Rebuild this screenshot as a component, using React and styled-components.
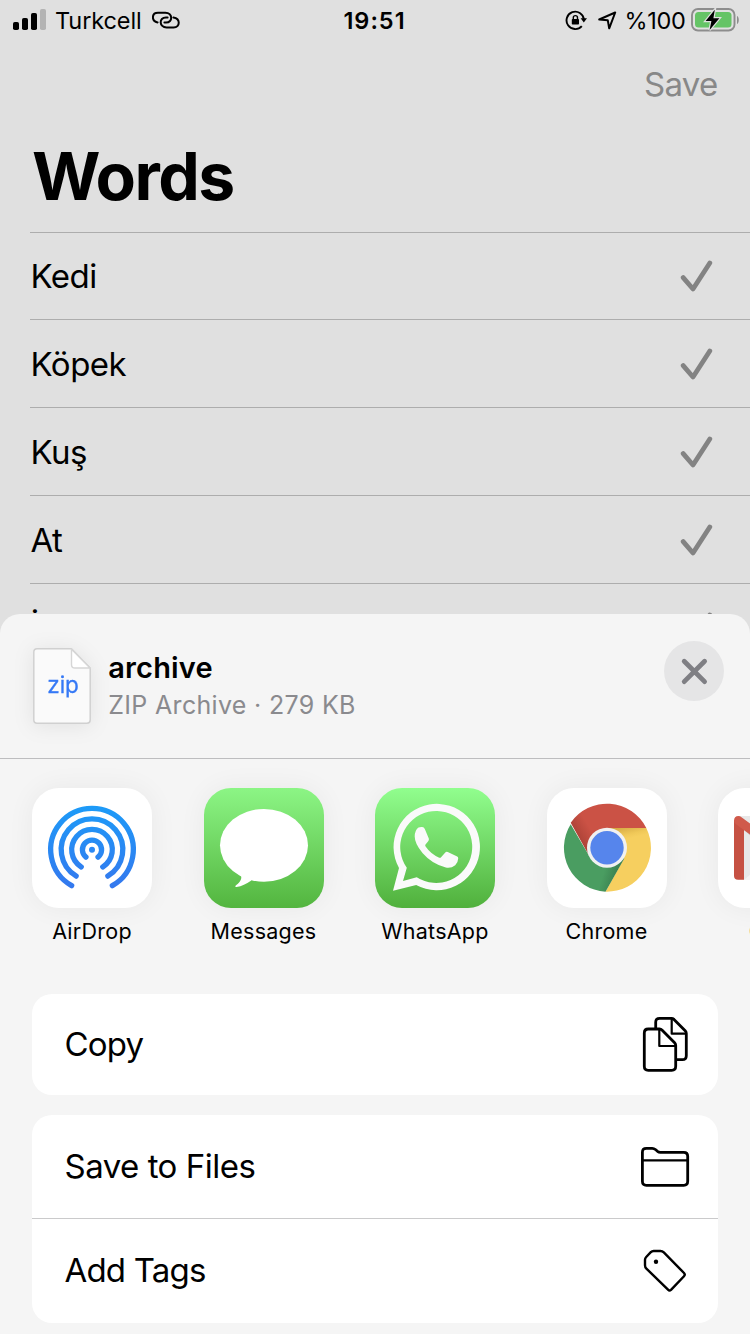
import React from 'react';
import styled, { createGlobalStyle } from 'styled-components';

const GlobalStyle = createGlobalStyle`
  * { box-sizing: border-box; }
  body { margin: 0; background: #e0e0e0; }
  svg { display: block; flex: none; }
`;

const Screen = styled.main`
  position: relative;
  width: 750px;
  height: 1334px;
  overflow: hidden;
  background: #e0e0e0;
  color: #000;
  font-family: Inter, 'Liberation Sans', sans-serif;
`;

const Label = styled.span`
  display: block;
  white-space: nowrap;
  font-size: ${(p) => p.$size}px;
  font-weight: ${(p) => p.$weight || 400};
  letter-spacing: ${(p) => p.$track || 0}px;
  line-height: 1.2;
  color: ${(p) => p.$color || 'inherit'};
`;

const StatusBar = styled.header`
  display: grid;
  grid-template-columns: 1fr auto 1fr;
  align-items: center;
  height: 40px;
  padding: 0 10.5px 0 13px;

  ${Label} { padding-top: 2px; }
`;

const StatusGroup = styled.div`
  display: flex;
  align-items: center;
  justify-content: ${(p) => (p.$end ? 'flex-end' : 'flex-start')};
`;

const Clock = styled(Label)`
  margin-right: 3.5px;
`;

const Gap = styled.span`
  flex: none;
  width: ${(p) => p.$w}px;
`;

const NavBar = styled.nav`
  display: flex;
  align-items: center;
  justify-content: flex-end;
  height: 88px;
  padding: 2px 32.5px 0 0;
`;

const Title = styled.h1`
  margin: 0;
  height: 104px;
  padding: 8px 0 0 32px;
  font-size: 66px;
  font-weight: 700;
  line-height: 80px;
  letter-spacing: -1.6px;
`;

const WordList = styled.ul`
  margin: 0 0 0 30px;
  padding: 0;
  list-style: none;
  border-top: 1px solid #adadad;
`;

const WordRow = styled.li`
  display: flex;
  align-items: center;
  justify-content: space-between;
  height: ${(p) => (p.$first ? 87 : 88)}px;
  padding-right: 34px;
  border-bottom: 1px solid #adadad;

  ${Label} { padding: 2px 0 0 0.5px; }
`;

const Sheet = styled.section`
  position: absolute;
  inset: 614px 0 0;
  display: flex;
  flex-direction: column;
  border-radius: 20px 20px 0 0;
  background: #f5f5f5;
  overflow: hidden;
`;

const SheetHeader = styled.div`
  display: flex;
  align-items: flex-start;
  height: 145px;
  padding: 34px 26px 0 33px;
  border-bottom: 1px solid #bdbdbf;
`;

const FileIcon = styled.div`
  filter: drop-shadow(0 2px 10px rgba(0, 0, 0, 0.08));
`;

const FileInfo = styled.div`
  flex: 1;
  display: flex;
  flex-direction: column;
  gap: 4px;
  padding: 3px 0 0 17.3px;
`;

const CloseButton = styled.button`
  display: grid;
  place-items: center;
  width: 60px;
  height: 60px;
  margin-top: -7px;
  padding: 0;
  border: 0;
  border-radius: 50%;
  background: #e5e5e6;
`;

const AppRow = styled.div`
  display: flex;
  gap: 51.5px;
  height: 235px;
  padding: 29px 0 0 32px;
`;

const AppItem = styled.div`
  flex: none;
  display: flex;
  flex-direction: column;
  align-items: center;
  gap: 11px;
  width: 120px;
`;

const AppTile = styled.div`
  width: 120px;
  height: 120px;
  border-radius: 27px;
  overflow: hidden;
  background: ${(p) => p.$bg || '#fff'};
  box-shadow: 0 0 28px rgba(0, 0, 0, 0.055);
`;

const Actions = styled.div`
  display: flex;
  flex-direction: column;
  gap: 20px;
  padding: 0 32px;
`;

const Card = styled.div`
  border-radius: 20px;
  background: #fff;
`;

const ActionRow = styled.div`
  display: flex;
  align-items: center;
  justify-content: space-between;
  height: ${(p) => p.$h}px;
  padding: 0 26px 0 32.5px;
  & + & { border-top: 1px solid #cacacb; }
`;

const Signal = () => (
  <svg width="34" height="22" viewBox="13 9 34 22">
    <rect x="13" y="22" width="6" height="8" rx="1.8" />
    <rect x="22" y="18" width="6" height="12" rx="1.8" />
    <rect x="31" y="13" width="6" height="17" rx="1.8" />
    <rect x="40" y="9" width="6" height="21" rx="1.8" fill="#b3b3b3" />
  </svg>
);

const HotspotIcon = () => (
  <svg width="28" height="18" viewBox="153 11 28 18" fill="none" stroke="#000" strokeWidth="2" strokeLinecap="round">
    <path d="M158.6 22.4 C152.2 21 152.4 12.7 159 12.7 H166.4 C173.8 12.7 174.2 22.6 167 22.6 H165.4" />
    <path d="M174.4 17.4 C181.6 18.4 181.4 27.4 174.6 27.4 H167.6 C160 27.4 159.6 17.4 167 17.4 H168.6" />
  </svg>
);

const RotationLock = () => (
  <svg width="22" height="22" viewBox="565 9.5 22 22" fill="none" stroke="#000" strokeWidth="1.9">
    <path d="M581.8 26.6 A8.7 8.7 0 1 1 583.9 20" />
    <path d="M580.6 18.8 h6.4 l-3.2 4.2 z" fill="#000" stroke="none" />
    <rect x="571.8" y="19.4" width="7.2" height="5.6" rx="0.8" fill="#000" stroke="none" />
    <path d="M573.3 20 v-1.8 a2.1 2.1 0 0 1 4.2 0 V20" strokeWidth="1.4" />
  </svg>
);

const LocationIcon = () => (
  <svg width="19" height="20" viewBox="598 10.5 19 20" fill="none" stroke="#000" strokeWidth="2" strokeLinejoin="round">
    <path d="M599.2 20 L615.2 13 L609.2 28.8 L607.8 20.8 Z" />
  </svg>
);

const Battery = () => (
  <svg width="49" height="24" viewBox="691 8 49 24">
    <rect x="692" y="9" width="42.5" height="21.5" rx="6" fill="none" stroke="#8d8d8d" strokeWidth="1.9" />
    <rect x="695" y="12" width="36.5" height="15.5" rx="3.5" fill="#65c466" />
    <path d="M737 16 c2.4 1 2.4 7 0 8 z" fill="#8d8d8d" />
    <path d="M714.8 9.8 L705.6 21 H711.4 L709.6 30 L719.4 18.2 H713.4 Z" fill="#000" stroke="#e0e0e0" strokeWidth="2.4" paintOrder="stroke" />
  </svg>
);

const Check = () => (
  <svg width="36" height="36" fill="none" stroke="#838383" strokeWidth="4.8" strokeLinecap="round" strokeLinejoin="round">
    <path d="M3.2 19.6 L13 31 L29.8 5" />
  </svg>
);

const ZipFile = () => (
  <svg width="58" height="76">
    <path d="M4 .8 H38.5 L57.2 20 V72 Q57.2 75.2 54 75.2 H4 Q.8 75.2 .8 72 V4 Q.8 .8 4 .8 Z" fill="#fafafa" stroke="#d0d0d0" strokeWidth="1.5" />
    <path d="M38.5 1.2 V16.4 Q38.5 20 42 20 H57 Z" fill="#fff" stroke="#d6d6d6" strokeWidth="1.4" />
    <text x="14.3" y="45" fontSize="22.5" fill="#3478f6" stroke="#3478f6" strokeWidth="0.3" textLength="31.5">zip</text>
  </svg>
);

const CloseIcon = () => (
  <svg width="30" height="30" stroke="#7f7f84" strokeWidth="4.8" strokeLinecap="round">
    <path d="M5.2 5.2 L25.6 25.6 M25.6 5.2 L5.2 25.6" />
  </svg>
);

const rings = [
  [41.3, 29.5],
  [30.8, 31],
  [20.3, 32],
  [9.6, 39],
];

const ringPath = ([r, deg]) => {
  const a = (deg * Math.PI) / 180;
  const dx = r * Math.sin(a);
  const y = 61.7 + r * Math.cos(a);
  return `M${60 - dx} ${y} A${r} ${r} 0 1 1 ${60 + dx} ${y}`;
};

const AirDropArt = () => (
  <svg width="120" height="120" fill="none">
    <linearGradient id="air" gradientUnits="userSpaceOnUse" x1="0" y1="18" x2="0" y2="100">
      <stop offset="0" stopColor="#1d9bf8" />
      <stop offset="1" stopColor="#3478ee" />
    </linearGradient>
    <g stroke="url(#air)" strokeWidth="5.3" strokeLinecap="round">
      {rings.map((ring) => <path key={ring[0]} d={ringPath(ring)} />)}
    </g>
    <circle cx="60" cy="61.7" r="3" fill="#2a88f4" />
  </svg>
);

const MessagesArt = () => (
  <svg width="120" height="120" fill="#fff">
    <ellipse cx="60" cy="57.3" rx="44" ry="36.4" />
    <path d="M34 84 L37 87.6 C38.4 91.6 35 95.4 31.3 98 C31 98.8 31.5 99 32.5 98.9 C38 98.4 42 96 47 92.8 L52 86 Z" />
  </svg>
);

const WhatsAppArt = () => (
  <svg width="120" height="120" fill="#fafafa">
    <path fillRule="evenodd" d="M18 102.7 L24 80 A43.2 43.2 0 1 1 41.2 97 Z M28 93 L41.7 89.2 A36 36 0 1 0 31.8 79.7 Z" />
    <path d="M43.5 39.6 Q45 38.8 47.2 39 Q49 39 49.8 41 L53.8 50.4 Q54.4 51.8 53 53.4 L50.5 56.4 Q49.8 57.3 50.6 58.6 Q55.8 66.2 64.2 69.7 Q65.4 70.2 66.3 69 L70.3 64.5 Q71.3 63.3 72.8 64 L82.2 68.4 Q83.3 69 83.2 70.6 Q83 75 80.2 77.2 Q76 80.6 70.8 79.5 Q57 76 47.5 65 Q39.7 55.6 39.7 48.5 Q39.8 42.4 43.5 39.6 Z" />
  </svg>
);

const ChromeArt = () => (
  <svg width="120" height="120">
    <linearGradient id="redShade" gradientUnits="userSpaceOnUse" x1="31" y1="54" x2="46" y2="45">
      <stop offset="0" stopColor="#a94136" />
      <stop offset="1" stopColor="#cb5245" />
    </linearGradient>
    <linearGradient id="yellowShade" gradientUnits="userSpaceOnUse" x1="76" y1="38" x2="79" y2="51">
      <stop offset="0" stopColor="#d4a843" />
      <stop offset="0.7" stopColor="#f0c858" />
      <stop offset="1" stopColor="#f6cf5f" />
    </linearGradient>
    <linearGradient id="greenShade" gradientUnits="userSpaceOnUse" x1="71" y1="84" x2="58" y2="80">
      <stop offset="0" stopColor="#3b8150" />
      <stop offset="1" stopColor="#4a9d61" />
    </linearGradient>
    <path d="M60 59.7 L42 67.5 L23.7 34.8 A44 44 0 0 1 99.3 40 H60 Z" fill="url(#redShade)" />
    <path d="M60 59.7 V40 H99.3 A44 44 0 0 1 58.5 103.7 L77 70.5 Z" fill="url(#yellowShade)" />
    <path d="M60 59.7 L77.3 70.5 L58.5 103.7 A44 44 0 0 1 23.7 36.3 L42.2 68 Z" fill="url(#greenShade)" />
    <circle cx="60" cy="59.7" r="20" fill="#f1f1f1" />
    <circle cx="60" cy="59.7" r="16.7" fill="#5685ec" />
  </svg>
);

const GmailArt = () => (
  <svg width="120" height="120">
    <path d="M20 28 H100 Q104 28 104 32 V88 Q104 91.7 100 91.7 H20 Z" fill="#e8e8e8" />
    <path d="M26 92 L60 62 L94 92 Z" fill="#f3f3f3" />
    <path d="M26 42 L60 72 V66 L26 38 Z" fill="#c9c9c9" />
    <path d="M16 32 V88 Q16 91.7 20 91.7 H26 V36 Z M104 32 V88 Q104 91.7 100 91.7 H94 V36 Z" fill="#c65143" />
    <path d="M16 33 Q16 28 20.5 28 Q22 28 23.5 29.2 L60 56 L96.5 29.2 Q98 28 99.5 28 Q104 28 104 33 Q104 36 101 38 L60 67 L19 37 Q16 35.5 16 33 Z" fill="#d05a4b" />
  </svg>
);

const CopyIcon = () => (
  <svg width="52" height="61" fill="none" stroke="#000" strokeWidth="2.8" strokeLinejoin="round">
    <path d="M15.7 15 V8.3 Q15.7 4.3 19.7 4.3 H31.5 Q32.8 4.3 34 5.4 L45.2 16.8 Q46.3 18 46.3 19.4 V41.7 Q46.3 45.7 42.3 45.7 H36" />
    <path d="M31.7 5 V19.7 H46" strokeWidth="2.2" />
    <path d="M8.3 15 H19.5 Q21 15 22.2 16.2 L34.6 28.8 Q35.7 30 35.7 31.4 V52.3 Q35.7 56.3 31.7 56.3 H8.3 Q4.3 56.3 4.3 52.3 V19 Q4.3 15 8.3 15 Z" />
    <path d="M19.3 16 V32 H35.4" strokeWidth="2.2" />
  </svg>
);

const FolderIcon = () => (
  <svg width="52" height="45" fill="none" stroke="#000" strokeWidth="2.8" strokeLinejoin="round">
    <path d="M2.4 8.3 Q2.4 4.3 6.4 4.3 H12.2 Q14 4.3 15.4 5.5 L17.5 7.3 Q18.8 8.3 20.4 8.3 H43.7 Q47.7 8.3 47.7 12.3 V37.3 Q47.7 41.3 43.7 41.3 H6.4 Q2.4 41.3 2.4 37.3 Z" />
    <path d="M2.4 16.4 H47.7" strokeWidth="2.2" />
  </svg>
);

const TagIcon = () => (
  <svg width="52" height="54" fill="none" stroke="#000" strokeWidth="2.4" strokeLinejoin="round">
    <path d="M13.6 7 H20.4 Q22.4 7 23.8 8.4 L44 29 Q45.5 30.6 44 32.2 L31 45.8 Q29.5 47.2 28 45.7 L6.4 24.6 Q5 23.2 5 21.2 V15.8 Q5 14.2 6.2 13 L10.8 8.2 Q12 7 13.6 7 Z" />
    <circle cx="16" cy="17.7" r="2.2" fill="#000" stroke="none" />
  </svg>
);

const words = ['Kedi', 'Köpek', 'Kuş', 'At', 'İnek'];

const apps = [
  { name: 'AirDrop', Art: AirDropArt },
  { name: 'Messages', Art: MessagesArt, bg: 'linear-gradient(#8cf585, #53b53f)' },
  { name: 'WhatsApp', Art: WhatsAppArt, bg: 'linear-gradient(#91fe8e, #50b03c)' },
  { name: 'Chrome', Art: ChromeArt },
  { name: 'Gmail', Art: GmailArt },
];

export default function App() {
  return (
    <Screen>
      <GlobalStyle />
      <StatusBar>
        <StatusGroup>
          <Signal />
          <Gap $w={8} />
          <Label $size={23.5} $track={-0.1}>Turkcell</Label>
          <Gap $w={10.5} />
          <HotspotIcon />
        </StatusGroup>
        <Clock $size={23.5} $weight={600} $track={1}>19:51</Clock>
        <StatusGroup $end>
          <RotationLock />
          <Gap $w={11} />
          <LocationIcon />
          <Gap $w={7.5} />
          <Label $size={23.5} $track={-0.3}>%100</Label>
          <Gap $w={5} />
          <Battery />
        </StatusGroup>
      </StatusBar>
      <NavBar>
        <Label $size={33} $color="#888" $track={-0.7}>Save</Label>
      </NavBar>
      <Title>Words</Title>
      <WordList>
        {words.map((word, i) => (
          <WordRow key={word} $first={i === 0}>
            <Label $size={33} $track={-0.5}>{word}</Label>
            <Check />
          </WordRow>
        ))}
      </WordList>

      <Sheet>
        <SheetHeader>
          <FileIcon><ZipFile /></FileIcon>
          <FileInfo>
            <Label $size={29} $weight={600} $track={0.15}>archive</Label>
            <Label $size={25} $color="#8a8a8e" $track={0.32}>ZIP Archive · 279 KB</Label>
          </FileInfo>
          <CloseButton aria-label="Close"><CloseIcon /></CloseButton>
        </SheetHeader>
        <AppRow>
          {apps.map(({ name, Art, bg }) => (
            <AppItem key={name}>
              <AppTile $bg={bg}><Art /></AppTile>
              <Label $size={21.5} $track={0.25}>{name}</Label>
            </AppItem>
          ))}
        </AppRow>
        <Actions>
          <Card>
            <ActionRow $h={101}><Label $size={33} $track={-0.8}>Copy</Label><CopyIcon /></ActionRow>
          </Card>
          <Card>
            <ActionRow $h={103}><Label $size={33} $track={-0.5}>Save to Files</Label><FolderIcon /></ActionRow>
            <ActionRow $h={105}><Label $size={33} $track={-0.8}>Add Tags</Label><TagIcon /></ActionRow>
          </Card>
        </Actions>
      </Sheet>
    </Screen>
  );
}
